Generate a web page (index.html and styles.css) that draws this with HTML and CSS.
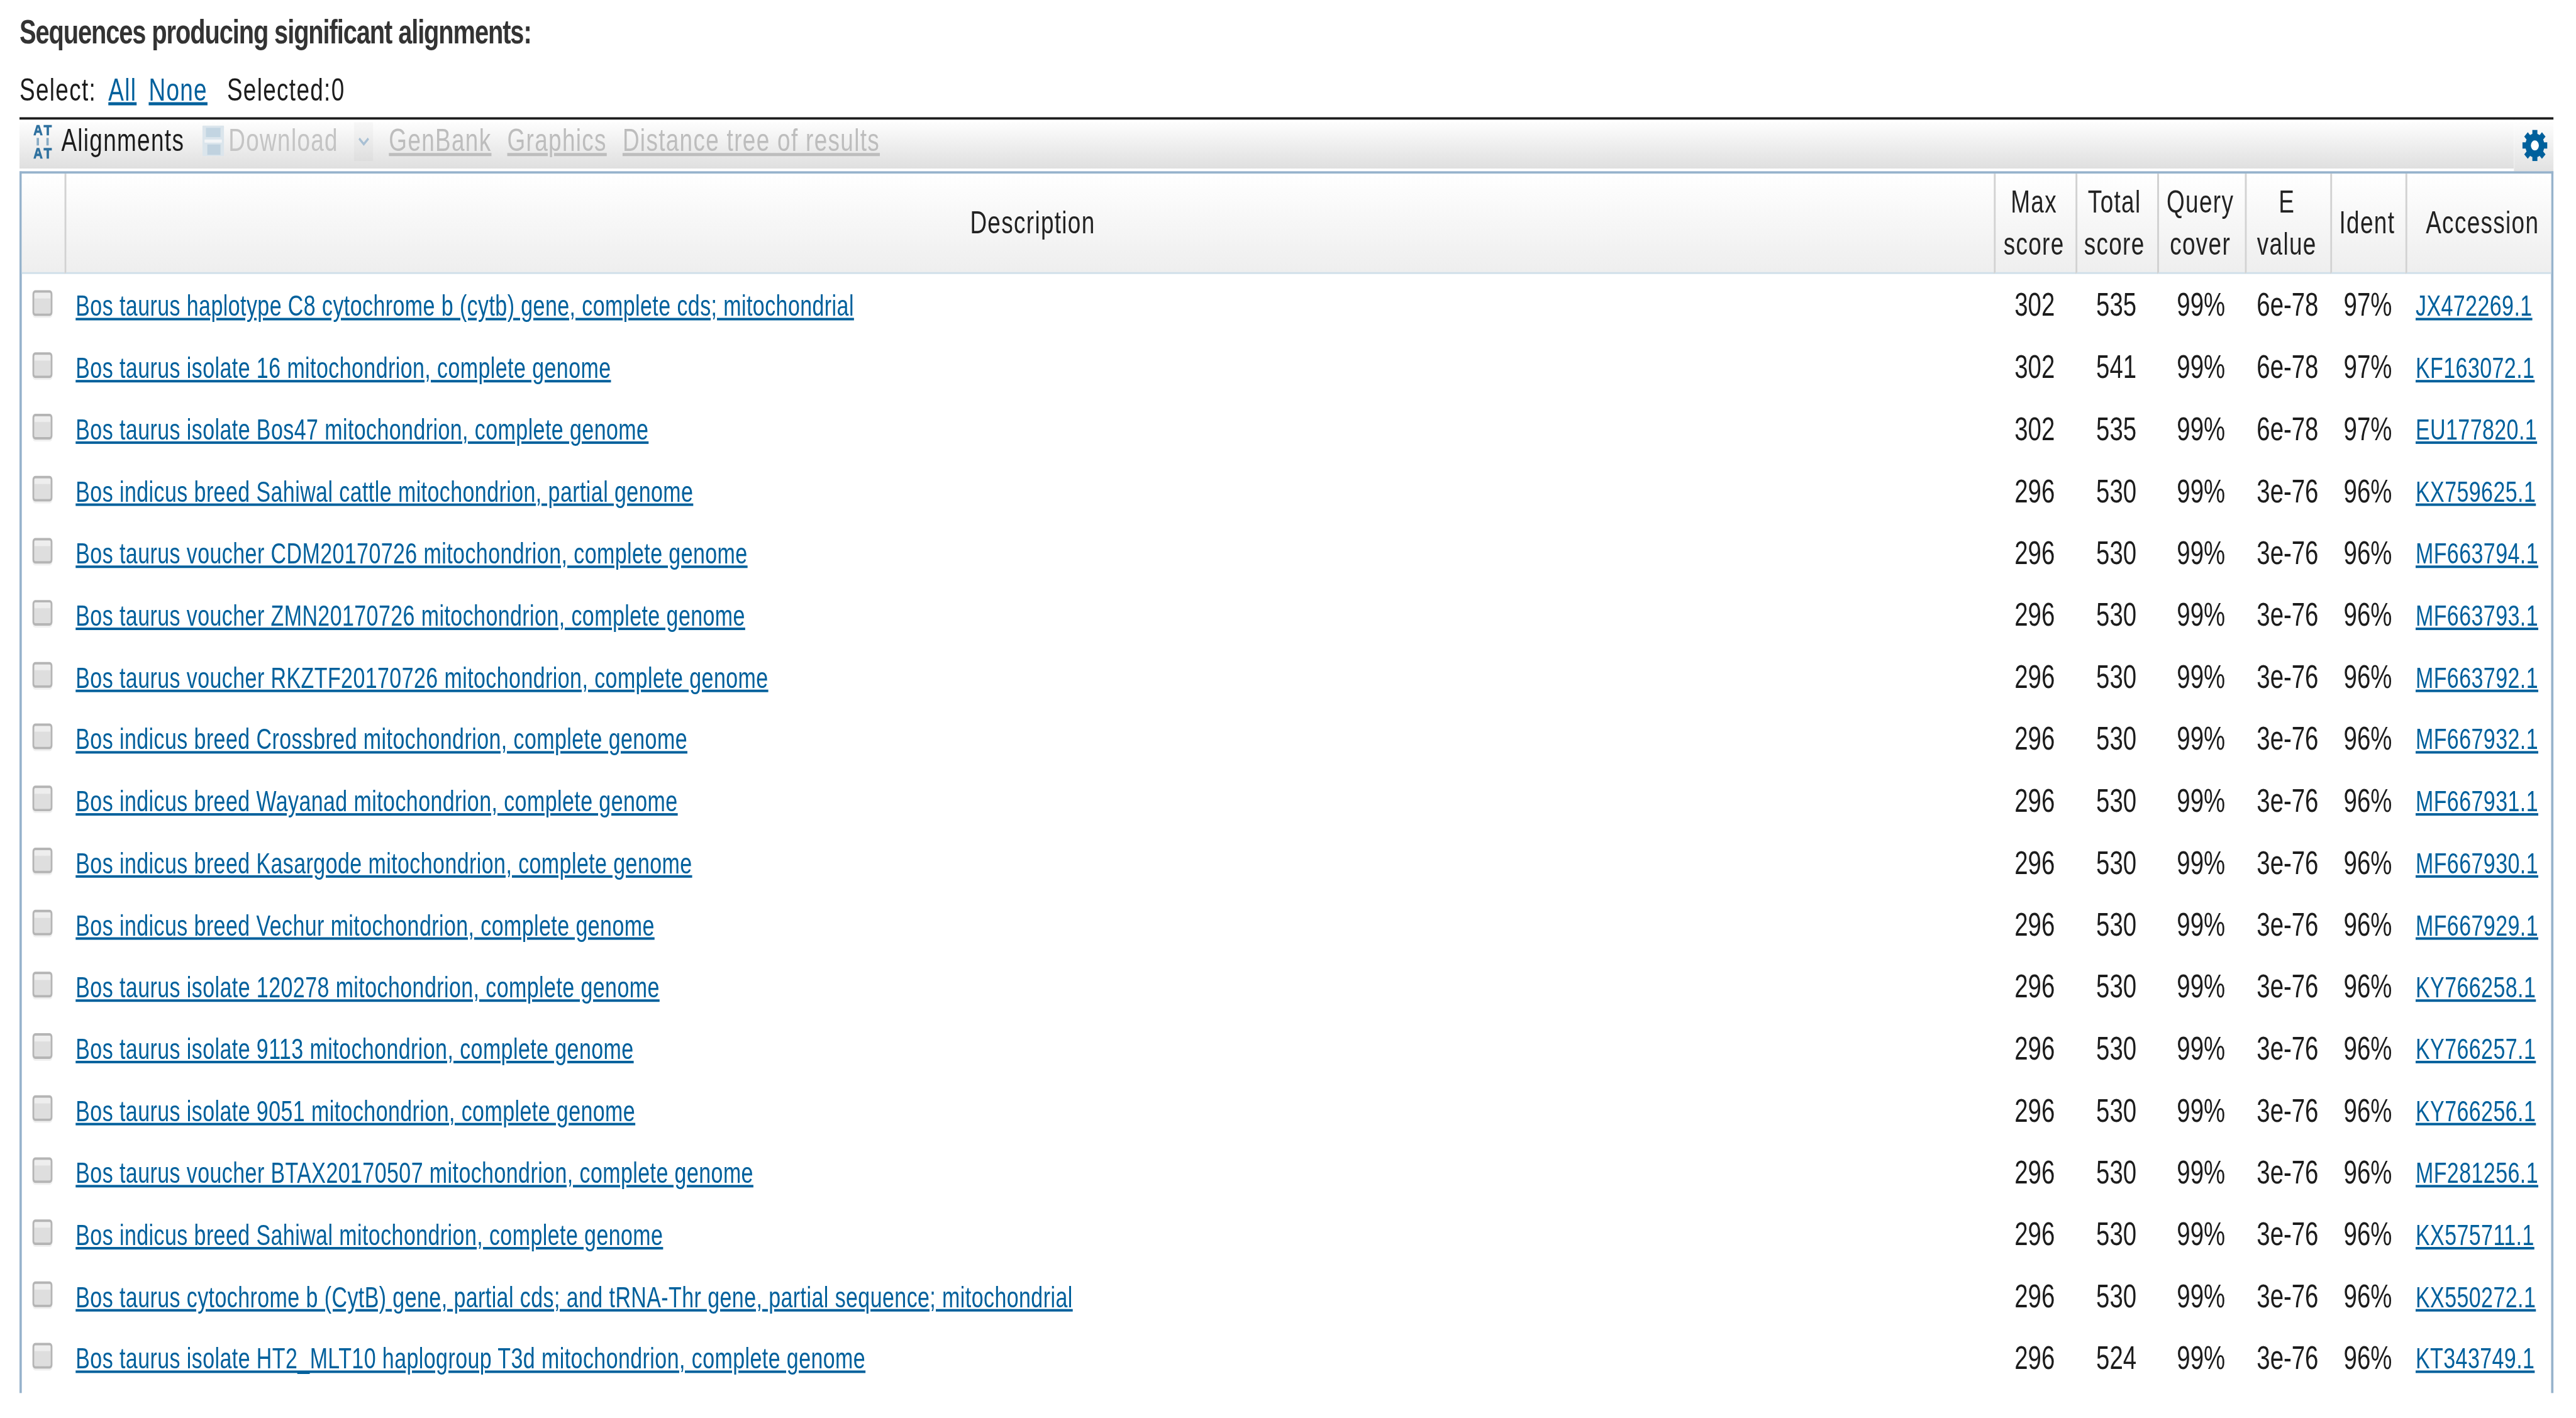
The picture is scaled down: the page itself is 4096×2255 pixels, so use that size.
FILE: index.html
```html
<!DOCTYPE html>
<html lang="en">
<head>
<meta charset="utf-8">
<title>Sequences producing significant alignments</title>
<link rel="stylesheet" href="styles.css">
</head>
<body>
<div class="frame">
<main class="page">
  <h2 class="heading">Sequences producing significant alignments:</h2>
  <div class="select-row">
    <span>Select:</span><a href="#">All</a><a href="#">None</a><span class="selected">Selected:0</span>
  </div>
  <div class="toolbar">
    <div class="tools">
      <svg class="at-icon" viewBox="0 0 40 58" preserveAspectRatio="none" aria-hidden="true">
        <g fill="#2f719f">
          <path d="M0 17 7 0h6l7 17h-5l-1.500-4h-7L5 17zM8 9h4l-2-5z"/>
          <path d="M22 0h18v4h-6.500v13h-5V4H22z"/>
          <rect x="7" y="21" width="5" height="12" opacity=".55"/>
          <rect x="28" y="21" width="5" height="12" opacity=".55"/>
          <path d="M0 54 7 37h6l7 17h-5l-1.500-4h-7L5 54zM8 46h4l-2-5z"/>
          <path d="M22 37h18v4h-6.500v13h-5V41H22z"/>
        </g>
      </svg>
      <span class="tool-active">Alignments</span>
      <svg class="save-icon" viewBox="0 0 48 50" preserveAspectRatio="none" aria-hidden="true">
        <rect x="0" y="0" width="48" height="50" rx="2" fill="#dbe5ec"/>
        <rect x="8" y="4" width="32" height="15" fill="#c3d5e2"/>
        <rect x="5" y="23" width="38" height="5" fill="#f3f5f7"/>
        <rect x="11" y="31" width="29" height="17" fill="#c0d2df"/>
      </svg>
      <span class="tool-off download">Download</span>
      <span class="caret">
        <svg class="chevron" viewBox="0 0 24 14" preserveAspectRatio="none" aria-hidden="true">
          <path d="M2 2l10 9 10-9" fill="none" stroke="#a9c0d4" stroke-width="4"/>
        </svg>
      </span>
      <a href="#" class="tool-link">GenBank</a>
      <a href="#" class="tool-link">Graphics</a>
      <a href="#" class="tool-link">Distance tree of results</a>
    </div>
    <div class="gear-box">
      <svg class="gear" viewBox="0 0 50 50" preserveAspectRatio="none" aria-hidden="true">
        <g fill="#00609c">
          <rect x="20" y="0" width="10" height="50"/>
          <rect x="0" y="20" width="50" height="10"/>
          <rect x="20" y="0" width="10" height="50" transform="rotate(45 25 25)"/>
          <rect x="20" y="0" width="10" height="50" transform="rotate(-45 25 25)"/>
        </g>
        <circle cx="25" cy="25" r="13.5" fill="#fff" stroke="#00609c" stroke-width="11"/>
      </svg>
    </div>
  </div>
  <table class="results">
    <colgroup>
      <col class="c-check"><col class="c-desc"><col class="c-max"><col class="c-total"><col class="c-query"><col class="c-e"><col class="c-ident"><col class="c-acc">
    </colgroup>
    <thead>
      <tr>
        <th></th><th class="th-desc">Description</th><th>Max<br>score</th><th class="th-total">Total<br>score</th><th>Query<br>cover</th><th>E<br>value</th><th>Ident</th><th class="th-acc">Accession</th>
      </tr>
    </thead>
    <tbody>
      <tr><td><span class="box"></span></td><td class="desc"><a href="#">Bos taurus haplotype C8 cytochrome b (cytb) gene, complete cds; mitochondrial</a></td><td>302</td><td>535</td><td>99%</td><td>6e-78</td><td>97%</td><td class="acc"><a href="#">JX472269.1</a></td></tr>
      <tr><td><span class="box"></span></td><td class="desc"><a href="#">Bos taurus isolate 16 mitochondrion, complete genome</a></td><td>302</td><td>541</td><td>99%</td><td>6e-78</td><td>97%</td><td class="acc"><a href="#">KF163072.1</a></td></tr>
      <tr><td><span class="box"></span></td><td class="desc"><a href="#">Bos taurus isolate Bos47 mitochondrion, complete genome</a></td><td>302</td><td>535</td><td>99%</td><td>6e-78</td><td>97%</td><td class="acc"><a href="#">EU177820.1</a></td></tr>
      <tr><td><span class="box"></span></td><td class="desc"><a href="#">Bos indicus breed Sahiwal cattle mitochondrion, partial genome</a></td><td>296</td><td>530</td><td>99%</td><td>3e-76</td><td>96%</td><td class="acc"><a href="#">KX759625.1</a></td></tr>
      <tr><td><span class="box"></span></td><td class="desc"><a href="#">Bos taurus voucher CDM20170726 mitochondrion, complete genome</a></td><td>296</td><td>530</td><td>99%</td><td>3e-76</td><td>96%</td><td class="acc"><a href="#">MF663794.1</a></td></tr>
      <tr><td><span class="box"></span></td><td class="desc"><a href="#">Bos taurus voucher ZMN20170726 mitochondrion, complete genome</a></td><td>296</td><td>530</td><td>99%</td><td>3e-76</td><td>96%</td><td class="acc"><a href="#">MF663793.1</a></td></tr>
      <tr><td><span class="box"></span></td><td class="desc"><a href="#">Bos taurus voucher RKZTF20170726 mitochondrion, complete genome</a></td><td>296</td><td>530</td><td>99%</td><td>3e-76</td><td>96%</td><td class="acc"><a href="#">MF663792.1</a></td></tr>
      <tr><td><span class="box"></span></td><td class="desc"><a href="#">Bos indicus breed Crossbred mitochondrion, complete genome</a></td><td>296</td><td>530</td><td>99%</td><td>3e-76</td><td>96%</td><td class="acc"><a href="#">MF667932.1</a></td></tr>
      <tr><td><span class="box"></span></td><td class="desc"><a href="#">Bos indicus breed Wayanad mitochondrion, complete genome</a></td><td>296</td><td>530</td><td>99%</td><td>3e-76</td><td>96%</td><td class="acc"><a href="#">MF667931.1</a></td></tr>
      <tr><td><span class="box"></span></td><td class="desc"><a href="#">Bos indicus breed Kasargode mitochondrion, complete genome</a></td><td>296</td><td>530</td><td>99%</td><td>3e-76</td><td>96%</td><td class="acc"><a href="#">MF667930.1</a></td></tr>
      <tr><td><span class="box"></span></td><td class="desc"><a href="#">Bos indicus breed Vechur mitochondrion, complete genome</a></td><td>296</td><td>530</td><td>99%</td><td>3e-76</td><td>96%</td><td class="acc"><a href="#">MF667929.1</a></td></tr>
      <tr><td><span class="box"></span></td><td class="desc"><a href="#">Bos taurus isolate 120278 mitochondrion, complete genome</a></td><td>296</td><td>530</td><td>99%</td><td>3e-76</td><td>96%</td><td class="acc"><a href="#">KY766258.1</a></td></tr>
      <tr><td><span class="box"></span></td><td class="desc"><a href="#">Bos taurus isolate 9113 mitochondrion, complete genome</a></td><td>296</td><td>530</td><td>99%</td><td>3e-76</td><td>96%</td><td class="acc"><a href="#">KY766257.1</a></td></tr>
      <tr><td><span class="box"></span></td><td class="desc"><a href="#">Bos taurus isolate 9051 mitochondrion, complete genome</a></td><td>296</td><td>530</td><td>99%</td><td>3e-76</td><td>96%</td><td class="acc"><a href="#">KY766256.1</a></td></tr>
      <tr><td><span class="box"></span></td><td class="desc"><a href="#">Bos taurus voucher BTAX20170507 mitochondrion, complete genome</a></td><td>296</td><td>530</td><td>99%</td><td>3e-76</td><td>96%</td><td class="acc"><a href="#">MF281256.1</a></td></tr>
      <tr><td><span class="box"></span></td><td class="desc"><a href="#">Bos indicus breed Sahiwal mitochondrion, complete genome</a></td><td>296</td><td>530</td><td>99%</td><td>3e-76</td><td>96%</td><td class="acc"><a href="#">KX575711.1</a></td></tr>
      <tr><td><span class="box"></span></td><td class="desc"><a href="#">Bos taurus cytochrome b (CytB) gene, partial cds; and tRNA-Thr gene, partial sequence; mitochondrial</a></td><td>296</td><td>530</td><td>99%</td><td>3e-76</td><td>96%</td><td class="acc"><a href="#">KX550272.1</a></td></tr>
      <tr><td><span class="box"></span></td><td class="desc"><a href="#">Bos taurus isolate HT2_MLT10 haplogroup T3d mitochondrion, complete genome</a></td><td>296</td><td>524</td><td>99%</td><td>3e-76</td><td>96%</td><td class="acc"><a href="#">KT343749.1</a></td></tr>
    </tbody>
  </table>
</main>
</div>
</body>
</html>
```

FILE: styles.css
```css
html, body {
  margin: 0;
  height: 100%;
  overflow: hidden;
  background: #fff;
}

.frame {
  width: 100%;
  height: 100%;
  overflow: hidden;
}

/* The reference is a squeezed capture: all of it is laid out wide, then narrowed as one. */
.page {
  box-sizing: border-box;
  width: 5503px;
  padding-left: 42px;
  font-family: "Liberation Sans", Arial, sans-serif;
  font-size: 50px;
  letter-spacing: 1.8px;
  color: #1c1c1c;
  transform: scale(0.7378, 0.997);
  transform-origin: 0 0;
  filter: blur(0.7px);
}

.heading {
  margin: 0;
  height: 100px;
  line-height: 100px;
  font-size: 54px;
  font-weight: bold;
  letter-spacing: -1.5px;
  color: #333;
}

.select-row {
  display: flex;
  gap: 26px;
  height: 87px;
  line-height: 87px;
}

.select-row a {
  color: #00609c;
}

.select-row .selected {
  margin-left: 16px;
}

.toolbar {
  display: flex;
  width: 5461px;
  border-top: 4px solid #1c1c1c;
}

.tools {
  flex: 1;
  display: flex;
  align-items: center;
  box-sizing: border-box;
  height: 82px;
  padding: 0 0 12px 30px;
  background: linear-gradient(#ffffff, #dfdfdf);
  background-clip: padding-box;
  border-bottom: 4px solid #fff;
}

.gear-box {
  display: flex;
  justify-content: center;
  box-sizing: border-box;
  width: 85px;
  height: 82px;
  padding: 16px 0 0 4px;
  background: linear-gradient(#ffffff, #e2e2e2);
}

.gear {
  width: 54px;
  height: 50px;
}

.at-icon {
  flex: none;
  width: 40px;
  height: 58px;
  margin-top: 8px;
}

.tool-active {
  margin-left: 20px;
}

.save-icon {
  flex: none;
  width: 47px;
  height: 49px;
  margin-left: 39px;
}

.tool-off {
  color: #c4c4c4;
}

.download {
  margin-left: 9px;
}

.caret {
  display: flex;
  align-items: center;
  justify-content: center;
  flex: none;
  align-self: flex-start;
  width: 41px;
  height: 62px;
  margin: 4px 0 0 34px;
  background: rgba(0, 0, 0, 0.025);
}

.chevron {
  width: 24px;
  height: 14px;
}

.tool-link {
  margin-left: 34px;
  color: #bdbdbd;
}

.results {
  box-sizing: border-box;
  width: 5461px;
  table-layout: fixed;
  border-collapse: separate;
  border-spacing: 0;
  padding-bottom: 7px;
  border-top: 4px solid #97b3cc;
  border-left: 5px solid #97b3cc;
  border-right: 5px solid #97b3cc;
}

.c-check { width: 92px; }
.c-desc { width: 4158px; }
.c-max { width: 176px; }
.c-total { width: 176px; }
.c-query { width: 189px; }
.c-e { width: 184px; }
.c-ident { width: 162px; }
.c-acc { width: auto; }

.results th {
  box-sizing: border-box;
  height: 160px;
  padding: 0 7px 0 0;
  font-weight: normal;
  line-height: 67px;
  vertical-align: middle;
  color: #222;
  background: linear-gradient(#ffffff, #eeeeee);
  border-left: 4px solid #d2d2d2;
  border-bottom: 3px solid #d0dfe9;
}

.results th:first-child {
  border-left: 0;
}

.results th.th-desc {
  padding: 0 0 0 11px;
}

.results th.th-total {
  padding: 0 12px 0 0;
}

.results th.th-acc {
  padding: 0 0 0 14px;
}

.results td {
  box-sizing: border-box;
  height: 98.8px;
  padding: 0;
  text-align: center;
  font-size: 52px;
  letter-spacing: 0;
}

.results a {
  color: #00609c;
}

.results td.desc,
.results td.acc {
  padding-top: 3px;
  text-align: left;
  font-size: 46px;
  letter-spacing: 0.6px;
}

.results td.desc {
  padding-left: 24px;
}

.results td.acc {
  padding-left: 22px;
}

.box {
  display: block;
  box-sizing: border-box;
  width: 43px;
  height: 41px;
  margin: -6px 0 0 23px;
  background: linear-gradient(#eeeeee 0 25%, #dedede 30% 100%);
  border: 4px solid #b5b5b5;
  border-radius: 6px;
  box-shadow: 0 3px 0 #f0f0f0;
}
```
